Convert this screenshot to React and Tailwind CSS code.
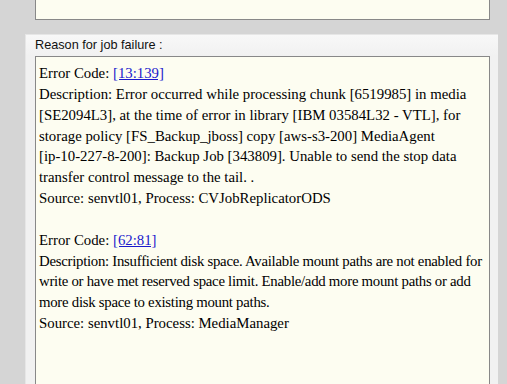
export default function App() {
    const serif = { fontFamily: '"Liberation Serif", "Times New Roman", serif' }

    return (
        <div className="w-[507px] h-[384px] overflow-hidden bg-[#d5d5d5] flex flex-col">
            {/* Previous box (cut off at top) */}
            <div className="ml-[35px] w-[455px] h-[20px] shrink-0 bg-[#fdfdf1] border border-t-0 border-[#888]" />

            {/* Reason panel */}
            <div className="ml-[25px] mt-[14px] w-[473px] flex-1 flex flex-col bg-gradient-to-b from-[#f8f8f8] to-[#f1f1f1] from-0% to-[6%] border-l border-t border-[#e6e6e6]">
                <div
                    className="h-[21px] pl-[9px] pt-[1px] text-[12.7px] leading-[18px] text-[#111]"
                    style={{ fontFamily: '"Liberation Sans", Arial, sans-serif' }}
                >
                    Reason for job failure :
                </div>
                <div
                    className="ml-[9px] w-[455px] flex-1 bg-[#fdfdf1] border border-b-0 border-[#888] pt-[6px] pl-[3px] pr-[1px] text-[14.8px] leading-[20.85px] text-black"
                    style={serif}
                >
                    <div>
                        Error Code: <span className="text-[#1a1acc] underline">[13:139]</span>
                    </div>
                    <div>
                        Description: Error occurred while processing chunk [6519985] in media [SE2094L3], at the time of error in library [IBM 03584L32 - VTL], for storage policy [FS_Backup_jboss] copy [aws-s3-200] MediaAgent
                        <br />
                        [ip-10-227-8-200]: Backup Job [343809]. Unable to send the stop data transfer control message to the tail. .
                    </div>
                    <div>Source: senvtl01, Process: CVJobReplicatorODS</div>
                    <div className="h-[20.85px]" />
                    <div>
                        Error Code: <span className="text-[#1a1acc] underline">[62:81]</span>
                    </div>
                    <div className="tracking-[-0.27px]">
                        Description: Insufficient disk space. Available mount paths are not enabled for write or have met reserved space limit. Enable/add more mount paths or add more disk space to existing mount paths.
                    </div>
                    <div>Source: senvtl01, Process: MediaManager</div>
                </div>
            </div>
        </div>
    )
}
